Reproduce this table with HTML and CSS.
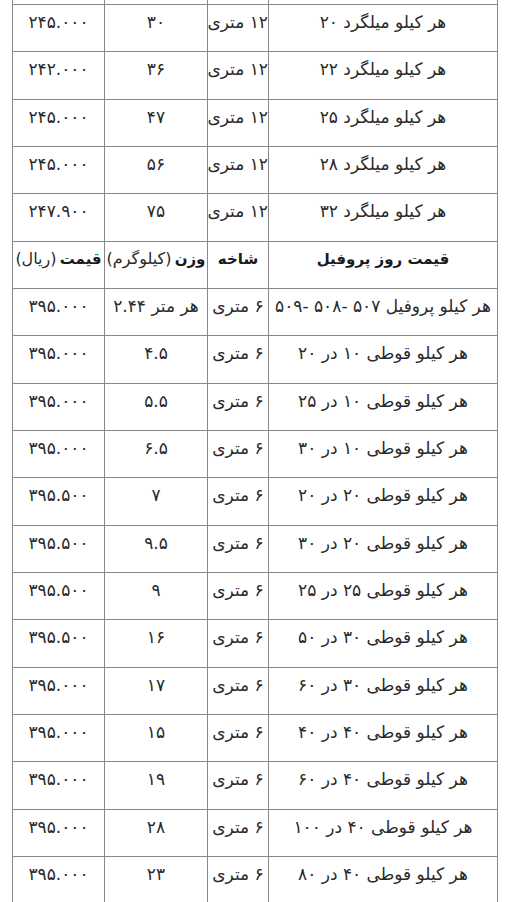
FILE: index.html
```html
<!DOCTYPE html>
<html lang="fa" dir="rtl">
<head>
<meta charset="utf-8">
<title>قیمت میلگرد و پروفیل</title>
<link rel="stylesheet" href="styles.css">
</head>
<body>
<div class="page">
<table class="price-table">
<colgroup>
<col class="c-name"><col class="c-len"><col class="c-weight"><col class="c-price">
</colgroup>
<tbody>
<tr class="cut"><td></td><td></td><td></td><td></td></tr>
<tr><td>هر کیلو میلگرد ۲۰</td><td>۱۲ متری</td><td>۳۰</td><td>۲۴۵.۰۰۰</td></tr>
<tr><td>هر کیلو میلگرد ۲۲</td><td>۱۲ متری</td><td>۳۶</td><td>۲۴۲.۰۰۰</td></tr>
<tr><td>هر کیلو میلگرد ۲۵</td><td>۱۲ متری</td><td>۴۷</td><td>۲۴۵.۰۰۰</td></tr>
<tr><td>هر کیلو میلگرد ۲۸</td><td>۱۲ متری</td><td>۵۶</td><td>۲۴۵.۰۰۰</td></tr>
<tr><td>هر کیلو میلگرد ۳۲</td><td>۱۲ متری</td><td>۷۵</td><td>۲۴۷.۹۰۰</td></tr>
<tr class="head"><td><b>قیمت روز پروفیل</b></td><td><b>شاخه</b></td><td><b>وزن</b>&#8201;(کیلوگرم)</td><td><b>قیمت</b>&#8201;(ریال)</td></tr>
<tr><td>هر کیلو پروفیل ۵۰۷ -۵۰۸ -۵۰۹</td><td>۶ متری</td><td>هر متر ۲.۴۴</td><td>۳۹۵.۰۰۰</td></tr>
<tr><td>هر کیلو قوطی ۱۰ در ۲۰</td><td>۶ متری</td><td>۴.۵</td><td>۳۹۵.۰۰۰</td></tr>
<tr><td>هر کیلو قوطی ۱۰ در ۲۵</td><td>۶ متری</td><td>۵.۵</td><td>۳۹۵.۰۰۰</td></tr>
<tr><td>هر کیلو قوطی ۱۰ در ۳۰</td><td>۶ متری</td><td>۶.۵</td><td>۳۹۵.۰۰۰</td></tr>
<tr><td>هر کیلو قوطی ۲۰ در ۲۰</td><td>۶ متری</td><td>۷</td><td>۳۹۵.۵۰۰</td></tr>
<tr><td>هر کیلو قوطی ۲۰ در ۳۰</td><td>۶ متری</td><td>۹.۵</td><td>۳۹۵.۵۰۰</td></tr>
<tr><td>هر کیلو قوطی ۲۵ در ۲۵</td><td>۶ متری</td><td>۹</td><td>۳۹۵.۵۰۰</td></tr>
<tr><td>هر کیلو قوطی ۳۰ در ۵۰</td><td>۶ متری</td><td>۱۶</td><td>۳۹۵.۵۰۰</td></tr>
<tr><td>هر کیلو قوطی ۳۰ در ۶۰</td><td>۶ متری</td><td>۱۷</td><td>۳۹۵.۰۰۰</td></tr>
<tr><td>هر کیلو قوطی ۴۰ در ۴۰</td><td>۶ متری</td><td>۱۵</td><td>۳۹۵.۰۰۰</td></tr>
<tr><td>هر کیلو قوطی ۴۰ در ۶۰</td><td>۶ متری</td><td>۱۹</td><td>۳۹۵.۰۰۰</td></tr>
<tr><td>هر کیلو قوطی ۴۰ در ۱۰۰</td><td>۶ متری</td><td>۲۸</td><td>۳۹۵.۰۰۰</td></tr>
<tr><td>هر کیلو قوطی ۴۰ در ۸۰</td><td>۶ متری</td><td>۲۳</td><td>۳۹۵.۰۰۰</td></tr>
</tbody>
</table>
</div>
</body>
</html>
```

FILE: styles.css
```css
html, body {
  margin: 0;
  padding: 0;
  background: #ffffff;
}
.page {
  padding: 0 16px 0 13px;
  overflow: hidden;
  height: 902px;
}
.price-table {
  direction: rtl;
  border-collapse: collapse;
  table-layout: fixed;
  width: 485px;
  margin-top: -43.33px;
  font-family: "DejaVu Sans", sans-serif;
  font-size: 17px;
  color: #2a2a2a;
}
.c-name { width: 229px; }
.c-len { width: 61px; }
.c-weight { width: 103px; }
.c-price { width: 92px; }
.price-table tr {
  height: 47.33px;
}
.price-table td {
  border: 1px solid #888888;
  padding: 5px 0 0 0;
  vertical-align: top;
  text-align: center;
  white-space: nowrap;
  line-height: 24px;
}
.price-table .head td {
  font-size: 16px;
}
.price-table b {
  font-weight: bold;
  font-size: 15px;
  color: #1a1a1a;
}
```
